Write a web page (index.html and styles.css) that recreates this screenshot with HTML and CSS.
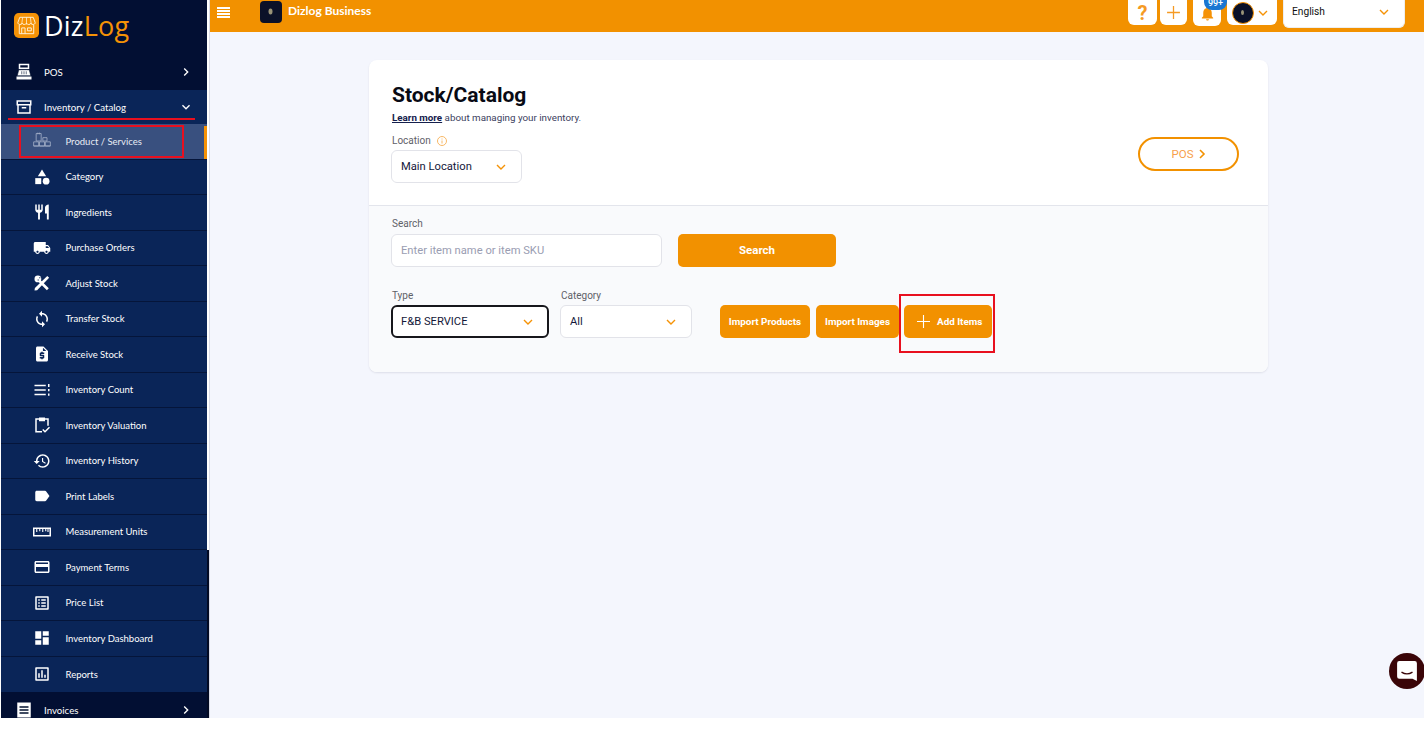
FILE: index.html
```html
<!DOCTYPE html>
<html lang="en">
<head>
<meta charset="utf-8">
<title>Dizlog Stock/Catalog</title>
<link rel="stylesheet" href="styles.css">
</head>
<body>
<div class="app">
  <aside class="sidebar">
    <nav class="nav">
      <div class="brand">
        <svg class="brand-icon" viewBox="0 0 26 26"><rect width="26" height="26" rx="5" fill="#f59206"/><path d="M6 4.5h14l2 5.5c0 1.2-1 2-2.2 2-1 0-1.800-.6-2.200-1.400-.4.8-1.300 1.400-2.300 1.400s-1.900-.6-2.300-1.400c-.4.8-1.300 1.400-2.300 1.400s-1.800-.6-2.200-1.400C8 11.400 7.200 12 6.200 12 5 12 4 11.200 4 10z" fill="none" stroke="#fff2d8" stroke-width="1"/><path d="M5.500 12.500v9h15v-9M8 21.500v-6h3.500v6M14 15.500h4v3h-4z" fill="none" stroke="#fff2d8" stroke-width="1"/><path d="M9 4.500 8 12M13 4.500V12M17 4.500l1 7.500" stroke="#fff2d8" stroke-width=".8"/></svg>
        <span class="brand-name">Diz<span class="brand-accent">Log</span></span>
      </div>
      <a class="head-row">
        <svg class="head-icon" viewBox="0 0 24 24"><path d="M6 2h12v5H6z" fill="none" stroke="#fff" stroke-width="2"/><path d="M5 9h14l2 8H3zM9 11v4M12 11v4M15 11v4" fill="#fff" stroke="#02102f" stroke-width=".8"/><path d="M2 18h20v4H2z" fill="#fff"/></svg>
        <span class="head-label">POS</span>
        <svg class="chev" viewBox="0 0 24 24"><path d="M10 6 8.590 7.410 13.170 12l-4.580 4.590L10 18l6-6z"/></svg>
      </a>
      <a class="head-row head-open">
        <svg class="head-icon" viewBox="0 0 24 24"><path d="M3 4h18v5H3zM4 9v11h16V9M9 13h6" fill="none" stroke="#fff" stroke-width="2"/></svg>
        <span class="head-label">Inventory / Catalog</span>
        <svg class="chev" viewBox="0 0 24 24"><path d="M16.590 8.590 12 13.170 7.410 8.590 6 10l6 6 6-6z"/></svg>
        <span class="mark-line"></span>
      </a>
      <a class="sub-row sub-active">
        <svg class="sub-icon dim" viewBox="0 0 24 24"><path d="M5 3h6v9H5zM7 2v2M9 2v2M13 8h5v4h-5zM2 13h6v5H2zM9 13h6v5H9zM16 13h6v5h-6zM2 18h20" fill="none" stroke="#cfd6e6" stroke-width="1"/></svg>
        <span>Product / Services</span>
        <span class="mark-box"></span>
        <span class="active-bar"></span>
      </a>
      <a class="sub-row">
        <svg class="sub-icon" viewBox="0 0 24 24"><path d="M12 2 6.500 11h11z"/><circle cx="17.500" cy="17.500" r="4.500"/><path d="M3 13.500h8v8H3z"/></svg>
        <span>Category</span>
      </a>
      <a class="sub-row">
        <svg class="sub-icon" viewBox="0 0 24 24"><path d="M11 9H9V2H7v7H5V2H3v7c0 2.120 1.660 3.840 3.750 3.970V22h2.500v-9.030C11.340 12.840 13 11.120 13 9V2h-2v7zm5-3v8h2.500v8H21V2c-2.760 0-5 2.240-5 4z"/></svg>
        <span>Ingredients</span>
      </a>
      <a class="sub-row">
        <svg class="sub-icon" viewBox="0 0 24 24"><path d="M20 8h-3V4H3c-1.100 0-2 .9-2 2v11h2c0 1.660 1.340 3 3 3s3-1.340 3-3h6c0 1.660 1.340 3 3 3s3-1.340 3-3h2v-5l-3-4zM6 18.500c-.83 0-1.500-.67-1.500-1.500s.67-1.500 1.500-1.500 1.500.67 1.500 1.500-.67 1.500-1.500 1.500zm13.500-9 1.960 2.500H17V9.500h2.500zm-1.500 9c-.83 0-1.500-.67-1.500-1.500s.67-1.500 1.500-1.500 1.500.67 1.500 1.500-.67 1.500-1.500 1.500z"/></svg>
        <span>Purchase Orders</span>
      </a>
      <a class="sub-row">
        <svg class="sub-icon" viewBox="0 0 24 24"><path d="M5 3 21 19l-2.500 2.500L2.500 5.500z"/><path d="M19 2.500 21.500 5 5.500 21.500 2 22l.5-3.500z"/><circle cx="6.500" cy="6.500" r="4.500"/><path d="M8 5h2M6 8h2" stroke="#0a2558" stroke-width="1"/></svg>
        <span>Adjust Stock</span>
      </a>
      <a class="sub-row">
        <svg class="sub-icon" viewBox="0 0 24 24"><path d="M12 4V1L8 5l4 4V6c3.310 0 6 2.690 6 6 0 1.010-.25 1.970-.7 2.800l1.460 1.460C19.540 15.030 20 13.570 20 12c0-4.420-3.580-8-8-8zm0 14c-3.310 0-6-2.690-6-6 0-1.010.25-1.970.7-2.800L5.240 7.740C4.460 8.970 4 10.430 4 12c0 4.420 3.580 8 8 8v3l4-4-4-4v3z"/></svg>
        <span>Transfer Stock</span>
      </a>
      <a class="sub-row">
        <svg class="sub-icon" viewBox="0 0 24 24"><path d="M14 2H6c-1.100 0-1.990.9-1.990 2L4 20c0 1.100.89 2 1.990 2H18c1.100 0 2-.9 2-2V8l-6-6zm1 10h-4v1h3c.55 0 1 .45 1 1v3c0 .55-.45 1-1 1h-1v1h-2v-1H9v-2h4v-1h-3c-.55 0-1-.45-1-1v-3c0-.55.45-1 1-1h1V9h2v1h2v2zm-1.750-4V3.500L17.750 8h-4.500z"/></svg>
        <span>Receive Stock</span>
      </a>
      <a class="sub-row">
        <svg class="sub-icon" viewBox="0 0 24 24"><path d="M2 5h15v2H2zM2 11h15v2H2zM2 17h15v2H2zM20 4h2v4h-2zM20 10.500h2v3h-2zM20 16.500h2v3h-2z"/></svg>
        <span>Inventory Count</span>
      </a>
      <a class="sub-row">
        <svg class="sub-icon" viewBox="0 0 24 24"><path d="M8 4H4v17h8M16 4h4v9" fill="none" stroke="#fff" stroke-width="2"/><path d="M8 2h8v5H8z"/><path d="m13 18 3 3 6-6" fill="none" stroke="#fff" stroke-width="2"/></svg>
        <span>Inventory Valuation</span>
      </a>
      <a class="sub-row">
        <svg class="sub-icon" viewBox="0 0 24 24"><path d="M13 3c-4.970 0-9 4.030-9 9H1l3.890 3.890.07.14L9 12H6c0-3.870 3.130-7 7-7s7 3.130 7 7-3.130 7-7 7c-1.930 0-3.680-.79-4.940-2.060l-1.420 1.420C8.270 19.990 10.510 21 13 21c4.970 0 9-4.030 9-9s-4.030-9-9-9zm-1 5v5l4.280 2.540.72-1.210-3.500-2.080V8H12z"/></svg>
        <span>Inventory History</span>
      </a>
      <a class="sub-row">
        <svg class="sub-icon" viewBox="0 0 24 24"><path d="M17.630 5.840C17.270 5.330 16.670 5 16 5L5 5.010C3.900 5.010 3 5.900 3 7v10c0 1.100.9 1.990 2 1.990L16 19c.67 0 1.270-.33 1.630-.84L22 12l-4.370-6.160z"/></svg>
        <span>Print Labels</span>
      </a>
      <a class="sub-row">
        <svg class="sub-icon" viewBox="0 0 24 24"><path d="M1 7h22v10H1z" fill="none" stroke="#fff" stroke-width="2"/><path d="M5 8v4M9 8v3M13 8v4M17 8v3M20 8v4" stroke="#fff" stroke-width="1.500"/></svg>
        <span>Measurement Units</span>
      </a>
      <a class="sub-row">
        <svg class="sub-icon" viewBox="0 0 24 24"><path d="M20 4H4c-1.110 0-1.990.89-1.990 2L2 18c0 1.110.89 2 2 2h16c1.110 0 2-.89 2-2V6c0-1.110-.89-2-2-2zm0 14H4v-6h16v6zm0-10H4V6h16v2z"/></svg>
        <span>Payment Terms</span>
      </a>
      <a class="sub-row">
        <svg class="sub-icon" viewBox="0 0 24 24"><path d="M19 5v14H5V5h14m1.100-2H3.900c-.5 0-.9.4-.9.9v16.200c0 .4.4.9.9.9h16.200c.4 0 .9-.5.9-.9V3.900c0-.5-.5-.9-.9-.9zM11 7h6v2h-6V7zm0 4h6v2h-6v-2zm0 4h6v2h-6zM7 7h2v2H7zm0 4h2v2H7zm0 4h2v2H7z"/></svg>
        <span>Price List</span>
      </a>
      <a class="sub-row">
        <svg class="sub-icon" viewBox="0 0 24 24"><path d="M3 13h8V3H3v10zm0 8h8v-6H3v6zm10 0h8V11h-8v10zm0-18v6h8V3h-8z"/></svg>
        <span>Inventory Dashboard</span>
      </a>
      <a class="sub-row sub-last">
        <svg class="sub-icon" viewBox="0 0 24 24"><path d="M19 5v14H5V5h14m1.100-2H3.900c-.5 0-.9.4-.9.9v16.200c0 .4.4.9.9.9h16.200c.4 0 .9-.5.9-.9V3.900c0-.5-.5-.9-.9-.9z"/><path d="M7 11h2v6H7zM11 7h2v10h-2zM15 13h2v4h-2z"/></svg>
        <span>Reports</span>
      </a>
      <a class="head-row">
        <svg class="head-icon" viewBox="0 0 24 24"><path d="M3 2h18v20H3z"/><path d="M6 8h12M6 12h12M6 16h12" stroke="#02102f" stroke-width="2"/></svg>
        <span class="head-label">Invoices</span>
        <svg class="chev" viewBox="0 0 24 24"><path d="M10 6 8.590 7.410 13.170 12l-4.580 4.590L10 18l6-6z"/></svg>
      </a>
    </nav>
    <div class="scroll-track"><div class="scroll-thumb"></div></div>
  </aside>

  <div class="main">
    <header class="topbar">
      <span class="burger"><i></i><i></i><i></i><i></i></span>
      <svg class="biz-logo" viewBox="0 0 22 22"><rect width="22" height="22" rx="4" fill="#0b1128"/><ellipse cx="10.500" cy="10.500" rx="2" ry="3" fill="#9a9478"/></svg>
      <span class="biz-name">Dizlog Business</span>
      <div class="top-actions">
        <button class="top-btn btn-help">?</button>
        <button class="top-btn btn-plus"><svg class="plus-icon" viewBox="0 0 14 14"><path d="M7 1v12M1 7h12" stroke="#f59a23" stroke-width="1.200"/></svg></button>
        <button class="top-btn btn-bell">
          <svg class="bell-icon" viewBox="0 0 24 24"><path d="M12 22c1.100 0 2-.9 2-2h-4c0 1.100.9 2 2 2zm6-6v-5c0-3.070-1.630-5.640-4.500-6.320V4c0-.83-.67-1.500-1.500-1.500s-1.500.67-1.500 1.500v.68C7.640 5.360 6 7.920 6 11v5l-2 2v1h16v-1l-2-2z"/></svg>
          <span class="badge">99+</span>
        </button>
        <button class="top-btn btn-user">
          <svg class="avatar" viewBox="0 0 22 22"><circle cx="11" cy="11" r="10.500" fill="#0b1128" stroke="#f59206"/><ellipse cx="10.500" cy="10.500" rx="1.500" ry="2.500" fill="#9a9478"/></svg>
          <svg class="caret" viewBox="0 0 12 8"><path d="m2 2 4 4 4-4" /></svg>
        </button>
        <div class="lang">
          <span>English</span>
          <svg class="caret" viewBox="0 0 12 8"><path d="m2 2 4 4 4-4" /></svg>
        </div>
      </div>
    </header>

    <div class="content">
      <section class="card">
        <div class="card-top">
          <div class="intro">
            <h1 class="title">Stock/Catalog</h1>
            <p class="lead"><a class="learn">Learn more</a> about managing your inventory.</p>
            <div class="label label-loc">Location
              <svg class="info" viewBox="0 0 12 12"><circle cx="6" cy="6" r="4.500"/><path d="M6 5.500V8.500M6 3.500v1"/></svg>
            </div>
            <div class="select select-loc"><span>Main Location</span><svg class="caret" viewBox="0 0 12 8"><path d="m2 2 4 4 4-4" /></svg></div>
          </div>
          <button class="pos-btn">POS <svg class="pos-chev" viewBox="0 0 8 12"><path d="m2 2 4 4-4 4"/></svg></button>
        </div>
        <div class="card-bottom">
          <div class="search-row">
            <div class="field">
              <div class="label">Search</div>
              <div class="input">Enter item name or item SKU</div>
            </div>
            <button class="btn btn-search">Search</button>
          </div>
          <div class="filter-row">
            <div class="field">
              <div class="label">Type</div>
              <div class="select select-type"><span>F&amp;B SERVICE</span><svg class="caret" viewBox="0 0 12 8"><path d="m2 2 4 4 4-4" /></svg></div>
            </div>
            <div class="field">
              <div class="label">Category</div>
              <div class="select select-cat"><span>All</span><svg class="caret" viewBox="0 0 12 8"><path d="m2 2 4 4 4-4" /></svg></div>
            </div>
            <div class="actions">
              <button class="btn btn-small btn-products">Import Products</button>
              <button class="btn btn-small btn-images">Import Images</button>
              <button class="btn btn-small btn-add">
                <svg class="add-icon" viewBox="0 0 14 14"><path d="M7 0v14M0 7h14" stroke="#fff" stroke-width="1.200"/></svg>
                <span>Add Items</span>
                <span class="mark-add"></span>
              </button>
            </div>
          </div>
        </div>
      </section>
    </div>
  </div>
</div>
<button class="chat"><svg class="chat-icon" viewBox="0 0 20 20"><path d="M3 1h14a2 2 0 0 1 2 2v16l-4-2H3a2 2 0 0 1-2-2V3a2 2 0 0 1 2-2z" fill="#fff"/><path d="M5 11c3 2 7 2 10 0" fill="none" stroke="#3a0508" stroke-width="1.200"/></svg></button>
</body>
</html>
```
FILE: styles.css
```css
* { box-sizing: border-box; }
html, body { margin: 0; padding: 0; }
body { background: #fff; font-family: Roboto, "Liberation Sans", sans-serif; width: 1424px; height: 751px; overflow: hidden; }
button { font-family: inherit; border: 0; padding: 0; }
.app { display: flex; height: 718px; }

/* sidebar */
.sidebar { display: flex; width: 210px; flex: none; height: 718px; overflow: hidden; border-right: 1px solid #d9dbe6; border-left: 1px solid #fff; }
.nav { width: 206px; flex: none; background: #020f33; font-family: Lato, "Open Sans", sans-serif; color: #fff; font-size: 9.500px; }
.scroll-track { width: 2px; flex: none; background: #020a24; }
.scroll-thumb { height: 550px; background: #fff; }
.brand { height: 54px; display: flex; align-items: center; padding-left: 13px; gap: 5px; }
.brand-icon { width: 25px; height: 25px; margin-top: -4px; }
.brand-name { font-family: "Open Sans", sans-serif; font-size: 27px; font-weight: 500; color: #fff; line-height: 1; margin-top: -4px; letter-spacing: .2px; }
.brand-accent { color: #f59206; font-weight: 400; }
.head-row { position: relative; height: 36px; display: flex; align-items: center; padding-left: 14px; }
.head-open { height: 34px; background: #0a2558; }
.head-icon { width: 18px; height: 18px; fill: #fff; flex: none; }
.head-label { margin-left: 11px; flex: 1; font-size: 9.700px; padding-bottom: 1px; }
.chev { width: 16px; height: 16px; fill: #fff; margin-right: 13px; flex: none; }
.mark-line { position: absolute; left: 7px; top: 28px; width: 187px; height: 2px; background: #e8101f; }
.sub-row { position: relative; height: 35.500px; display: flex; align-items: center; padding-left: 32px; background: #0a2558; border-bottom: 1px solid #05153a; }
.sub-last { border-bottom: 0; }
.sub-icon { width: 18px; height: 18px; fill: #fff; margin-right: 14.500px; flex: none; }
.sub-active { background: #39507f; color: #e8ecf4; }
.dim { opacity: .7; width: 20px; height: 20px; margin-left: -1px; margin-right: 13.500px; }
.mark-box { position: absolute; left: 18px; top: 1px; width: 165px; height: 33px; border: 2px solid #e8101f; }
.active-bar { position: absolute; right: 0; top: 2px; width: 3px; height: 33px; background: #f59206; }

/* main */
.main { flex: 1; display: flex; flex-direction: column; min-width: 0; }
.topbar { height: 32px; background: #f29100; display: flex; align-items: flex-start; padding-left: 7px; flex: none; }
.burger { width: 13px; margin-top: 7px; display: flex; flex-direction: column; gap: 1.500px; }
.burger i { display: block; height: 1.500px; background: #fff; }
.biz-logo { width: 22px; height: 22px; margin: 1px 0 0 30px; }
.biz-name { font-family: Lato, sans-serif; font-weight: 700; font-size: 12px; color: #fff; margin: 3px 0 0 6px; line-height: 15px; }
.top-actions { margin-left: auto; padding-right: 19px; display: flex; align-items: flex-start; }
.top-btn { position: relative; height: 25px; background: #fff; border-radius: 0 0 6px 6px; display: flex; align-items: center; justify-content: center; color: #f59a23; }
.btn-help { width: 29px; font-size: 20px; font-weight: 700; margin-right: 3px; }
.btn-plus { width: 27px; margin-right: 6px; }
.plus-icon { width: 15px; height: 15px; }
.btn-bell { width: 28px; height: 26px; margin-right: 6px; }
.bell-icon { width: 17px; height: 19px; fill: #f59206; }
.badge { position: absolute; left: 11px; top: -1px; width: 23px; height: 11px; border-radius: 0 0 8px 8px; background: #1976d2; color: #fff; font-size: 9px; font-weight: 500; line-height: 8px; text-align: center; }
.btn-user { width: 50px; margin-right: 6px; gap: 3px; justify-content: flex-start; padding-left: 5px; }
.avatar { width: 22px; height: 22px; }
.caret { width: 12px; height: 8px; fill: none; stroke: #f59206; stroke-width: 1.400; flex: none; }
.lang { width: 122px; height: 28px; background: #fff; border-radius: 0 0 6px 6px; border: 1px solid #eee; border-top: 0; display: flex; align-items: center; justify-content: space-between; padding: 0 14px 4px 8px; font-size: 10.200px; color: #111; }
.content { flex: 1; background: #f4f6fd; padding: 28px 0 0 159px; }

/* card */
.card { width: 899px; height: 312px; border-radius: 8px; background: #fff; box-shadow: 0 1px 2px #dcdee8; overflow: hidden; }
.card-top { height: 146px; padding: 23px 29px 0 23px; border-bottom: 1px solid #e3e5ec; display: flex; justify-content: space-between; align-items: flex-start; }
.title { margin: 0; font-size: 21px; font-weight: 700; line-height: 24px; color: #080a14; }
.lead { margin: 4px 0 0; font-size: 9.800px; line-height: 14px; color: #3c4160; }
.learn { font-weight: 700; color: #15204d; text-decoration: underline; }
.label { font-size: 10px; line-height: 12px; color: #5f6168; margin-left: 1px; }
.label-loc { margin: 10px 0 0; display: flex; align-items: center; gap: 5px; }
.info { width: 12px; height: 12px; fill: none; stroke: #f7b866; stroke-width: 1; }
.select { display: flex; align-items: center; justify-content: space-between; background: #fff; border: 1px solid #e2e3e9; border-radius: 6px; height: 33px; font-size: 11.200px; color: #15183a; padding-left: 9px; }
.select-loc { width: 131px; margin: 3px 0 0 -1px; padding-right: 14px; }
.select-type { width: 158px; border: 2px solid #17171c; padding: 0 13px 0 8px; }
.select-cat { width: 132px; padding-right: 14px; }
.pos-btn { margin-top: 54px; width: 101px; height: 34px; background: #fff; border: 2px solid #f29100; border-radius: 17px; color: #f7a04c; font-size: 11.500px; display: flex; align-items: center; justify-content: center; gap: 4px; }
.pos-chev { width: 8px; height: 12px; fill: none; stroke: #f29100; stroke-width: 1.600; }
.card-bottom { height: 166px; background: #f9fafc; padding: 12px 0 0 22px; }
.search-row { display: flex; align-items: flex-end; gap: 16px; }
.input { width: 271px; height: 33px; background: #fff; border: 1px solid #e2e3e9; border-radius: 6px; margin-top: 4px; padding-left: 9px; font-size: 11.200px; line-height: 31px; color: #9a9db2; }
.btn { background: #f29100; color: #fff; border-radius: 5px; font-weight: 700; }
.btn-search { width: 158px; height: 33px; font-size: 11.500px; padding-bottom: 1px; }
.filter-row { display: flex; align-items: flex-end; margin-top: 23px; }
.filter-row .field { margin-right: 11px; }
.filter-row .select { margin-top: 3px; }
.actions { display: flex; margin-left: 17px; }
.btn-small { height: 33px; font-size: 9.900px; }
.btn-products { width: 90px; margin-right: 6px; }
.btn-images { width: 83px; margin-right: 5px; }
.btn-add { position: relative; width: 88px; display: flex; align-items: center; padding-left: 13px; gap: 7px; }
.add-icon { width: 13px; height: 13px; flex: none; }
.mark-add { position: absolute; left: -5px; top: -11px; width: 96px; height: 59px; border: 2px solid #e8101f; }

/* chat */
.chat { position: absolute; left: 1389px; top: 653px; width: 36px; height: 36px; border-radius: 50%; background: #3a0508; display: flex; align-items: center; justify-content: center; }
.chat-icon { width: 22px; height: 22px; }
```
